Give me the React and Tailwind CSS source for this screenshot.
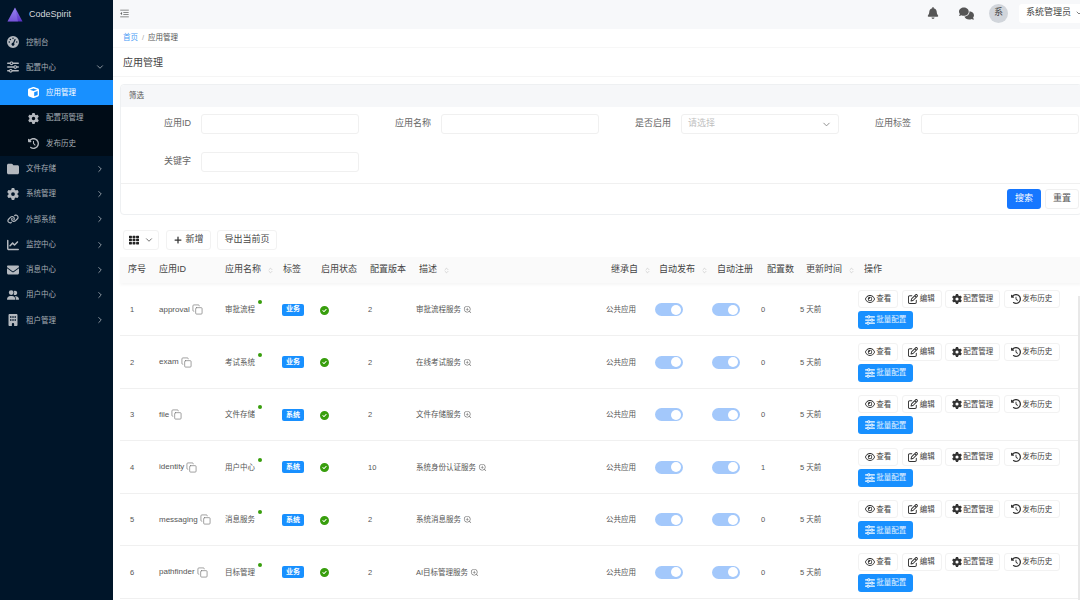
import React from 'react'
import {
  FaGaugeHigh, FaSliders, FaCube, FaGear, FaClockRotateLeft, FaFolder, FaLink, FaChartLine,
  FaEnvelope, FaUserGroup, FaBuilding, FaBell, FaComments, FaRegEye, FaRegPenToSquare, FaCircleCheck,
} from 'react-icons/fa6'
import { FaTh } from 'react-icons/fa'
import { AiOutlineMenuFold, AiOutlineZoomIn } from 'react-icons/ai'
import { ChevronDown, ChevronRight, Plus, Copy, ChevronsUpDown } from 'lucide-react'

const FONT = { fontFamily: '"Liberation Sans", "Noto Sans CJK SC", sans-serif' }

const topMenus = [
  { label: '文件存储', icon: FaFolder },
  { label: '系统管理', icon: FaGear },
  { label: '外部系统', icon: FaLink },
  { label: '监控中心', icon: FaChartLine },
  { label: '消息中心', icon: FaEnvelope },
  { label: '用户中心', icon: FaUserGroup },
  { label: '租户管理', icon: FaBuilding },
]

const rows = [
  { no: 1, id: 'approval', name: '审批流程', tag: '业务', version: 2, desc: '审批流程服务', count: 0 },
  { no: 2, id: 'exam', name: '考试系统', tag: '业务', version: 2, desc: '在线考试服务', count: 0 },
  { no: 3, id: 'file', name: '文件存储', tag: '系统', version: 2, desc: '文件存储服务', count: 0 },
  { no: 4, id: 'identity', name: '用户中心', tag: '系统', version: 10, desc: '系统身份认证服务', count: 1 },
  { no: 5, id: 'messaging', name: '消息服务', tag: '系统', version: 2, desc: '系统消息服务', count: 0 },
  { no: 6, id: 'pathfinder', name: '目标管理', tag: '业务', version: 2, desc: 'AI目标管理服务', count: 0 },
]

const columns = [
  { label: '序号', w: 'w-[32px]' },
  { label: '应用ID', w: 'w-[67px]' },
  { label: '应用名称', w: 'w-[58px]', sort: true },
  { label: '标签', w: 'w-[38px]' },
  { label: '启用状态', w: 'w-[49px]' },
  { label: '配置版本', w: 'w-[49px]' },
  { label: '描述', w: 'w-[192px]', sort: true },
  { label: '继承自', w: 'w-[48px]', sort: true },
  { label: '自动发布', w: 'w-[58px]', sort: true },
  { label: '自动注册', w: 'w-[50px]' },
  { label: '配置数', w: 'w-[39px]' },
  { label: '更新时间', w: 'w-[58px]', sort: true },
  { label: '操作', w: 'w-[224px]' },
]

function SideItem({ icon: Icon, label, open, arrow = true }) {
  return (
    <div className="h-[25.3px] flex items-center pl-[7px] pr-[8px] text-[7.5px] text-[#a6adb4]">
      <Icon className="w-[12px] h-[12px] text-[#b4b9bf] shrink-0" />
      <span className="ml-[7px] flex-1">{label}</span>
      {arrow && (open
        ? <ChevronDown className="w-[10px] h-[10px]" />
        : <ChevronRight className="w-[10px] h-[10px]" />)}
    </div>
  )
}

function SubItem({ icon: Icon, label, active }) {
  return (
    <div className={`h-[25.3px] flex items-center pl-[28px] text-[7.5px] ${active ? 'bg-[#1890ff] text-white' : 'text-[#a6adb4]'}`}>
      <Icon className={`w-[11px] h-[11px] shrink-0 ${active ? 'text-white' : 'text-[#b4b9bf]'}`} />
      <span className="ml-[7px]">{label}</span>
    </div>
  )
}

function Sidebar() {
  return (
    <aside className="w-[113px] shrink-0 bg-[#001529] h-[600px]">
      <div className="h-[29.5px] flex items-center pl-[7px]">
        <svg width="16" height="15" viewBox="0 0 16 15">
          <defs>
            <linearGradient id="logo" x1="0" y1="0" x2="0" y2="1">
              <stop offset="0" stopColor="#8f7cf0" />
              <stop offset="1" stopColor="#5a2fc4" />
            </linearGradient>
          </defs>
          <path d="M8 0.5 L15.5 14.5 L0.5 14.5 Z" fill="url(#logo)" />
          <path d="M8 0.5 L11 14.5 L0.5 14.5 Z" fill="#a897f5" opacity="0.35" />
        </svg>
        <span className="ml-[6px] text-[9px] text-[#d5d8dc]">CodeSpirit</span>
      </div>
      <SideItem icon={FaGaugeHigh} label="控制台" arrow={false} />
      <SideItem icon={FaSliders} label="配置中心" open />
      <SubItem icon={FaCube} label="应用管理" active />
      <div className="bg-[#000c17]">
        <SubItem icon={FaGear} label="配置项管理" />
        <SubItem icon={FaClockRotateLeft} label="发布历史" />
      </div>
      {topMenus.map((m) => (
        <SideItem key={m.label} icon={m.icon} label={m.label} />
      ))}
    </aside>
  )
}

function Field({ label, children }) {
  return (
    <div className="flex items-center h-[20px]">
      <label className="w-[70px] text-right text-[9px] text-[#666] shrink-0">{label}</label>
      <div className="ml-[10px] w-[158px]">{children}</div>
    </div>
  )
}

function TextBox() {
  return <div className="h-[20px] rounded-[3px] border border-[#f0f0f0] bg-white" />
}

function FilterCard() {
  return (
    <div className="mt-[7px] ml-[7px] w-[962px] h-[131px] rounded-[4px] border border-[#eef0f2] bg-white">
      <div className="h-[22px] bg-[#f6f7f9] rounded-t-[4px] flex items-center pl-[8px] text-[7.5px] text-[#555]">筛选</div>
      <div className="grid grid-cols-[240px_240px_240px_240px] content-start gap-y-[18px] pt-[7px] h-[76px]">
        <Field label="应用ID"><TextBox /></Field>
        <Field label="应用名称"><TextBox /></Field>
        <Field label="是否启用">
          <div className="h-[20px] rounded-[3px] border border-[#f0f0f0] flex items-center justify-between px-[6px] text-[9px] text-[#bfbfbf]">
            请选择
            <ChevronDown className="w-[11px] h-[11px] text-[#888]" />
          </div>
        </Field>
        <Field label="应用标签"><TextBox /></Field>
        <Field label="关键字"><TextBox /></Field>
      </div>
      <div className="border-t border-[#f0f0f0] h-[31px] flex items-center justify-end gap-[4px] pr-[2px]">
        <button className="w-[34px] h-[20px] rounded-[3px] bg-[#1677ff] text-white text-[9px]">搜索</button>
        <button className="w-[34px] h-[20px] rounded-[3px] border border-[#f0f0f0] text-[#555] text-[9px]">重置</button>
      </div>
    </div>
  )
}

function Toolbar() {
  return (
    <div className="flex items-center mt-[14px] ml-[10px] h-[21px] text-[9px] text-[#444]">
      <button className="w-[36px] h-[20px] rounded-[3px] border border-[#f2f2f2] flex items-center justify-center gap-[5px]">
        <FaTh className="w-[10px] h-[10px] text-[#222]" />
        <ChevronDown className="w-[10px] h-[10px] text-[#555]" />
      </button>
      <button className="ml-[7px] w-[45px] h-[20px] rounded-[3px] border border-[#f2f2f2] flex items-center justify-center gap-[2px]">
        <Plus className="w-[10px] h-[10px] text-[#333]" strokeWidth={3} />
        新增
      </button>
      <button className="ml-[6px] w-[60px] h-[20px] rounded-[3px] border border-[#f2f2f2]">导出当前页</button>
    </div>
  )
}

function ActionBtn({ icon: Icon, label, w, primary }) {
  return (
    <button className={`${w} h-[18px] rounded-[3px] flex items-center justify-center gap-[1.5px] text-[7.5px] ${primary ? 'bg-[#1890ff] text-[#e6f2ff]' : 'border border-[#f2f2f2] bg-white text-[#444]'}`}>
      <Icon className={`w-[10px] h-[10px] shrink-0 ${primary ? 'text-white' : 'text-[#333]'}`} />
      {label}
    </button>
  )
}

function Toggle() {
  return (
    <div className="w-[28px] h-[13px] rounded-full bg-[#a3c8fb] flex items-center justify-end pr-[2px]">
      <div className="w-[10px] h-[10px] rounded-full bg-white" />
    </div>
  )
}

function AppTable() {
  return (
    <table className="ml-[7px] mt-[7px] w-[962px] table-fixed border-collapse text-[7.5px] text-[#555]">
      <thead>
        <tr className="h-[26px] bg-[#fafafa] shadow-[0_2px_3px_rgba(0,0,0,0.04)]">
          {columns.map((c, i) => (
            <th key={c.label} className={`${c.w} p-0 text-left font-normal text-[9px] text-[#444] ${i === 0 ? 'pl-[8px]' : i === 1 ? 'pl-[7px]' : 'pl-[6px]'}`}>
              <span className="flex items-center whitespace-nowrap">
                {c.label}
                {c.sort && <ChevronsUpDown className="ml-[6px] w-[7px] h-[9px] text-[#bbb] shrink-0" />}
              </span>
            </th>
          ))}
        </tr>
      </thead>
      <tbody>
        {rows.map((r) => (
          <tr key={r.no} className="h-[52.5px] border-b border-[#f0f0f0] [&>td]:pt-[1px]">
            <td className="p-0 pl-[10px]">{r.no}</td>
            <td className="p-0 pl-[7px]">
              <span className="flex items-center gap-[2px] text-[8px]">
                {r.id}
                <Copy className="w-[11px] h-[11px] text-[#777]" strokeWidth={1.5} />
              </span>
            </td>
            <td className="p-0 pl-[6px]">
              <span className="relative inline-block">
                {r.name}
                <span className="absolute top-[-4px] right-[-7px] w-[4px] h-[4px] rounded-full bg-[#389e0d]" />
              </span>
            </td>
            <td className="p-0 pl-[5px]">
              <span className="inline-flex items-center justify-center w-[22px] h-[12px] rounded-[2px] bg-[#1890ff] text-white text-[7px] font-bold">{r.tag}</span>
            </td>
            <td className="p-0 pl-[5px]">
              <FaCircleCheck className="w-[9px] h-[9px] text-[#389e0d] mt-[1px]" />
            </td>
            <td className="p-0 pl-[4px]">{r.version}</td>
            <td className="p-0 pl-[3px]">
              <span className="flex items-center gap-[2px]">
                {r.desc}
                <AiOutlineZoomIn className="w-[9px] h-[9px] text-[#777]" />
              </span>
            </td>
            <td className="p-0 pl-[1px]">公共应用</td>
            <td className="p-0 pl-[2px]"><Toggle /></td>
            <td className="p-0 pl-[1px]"><Toggle /></td>
            <td className="p-0">{r.count}</td>
            <td className="p-0">5 天前</td>
            <td className="p-0">
              <div className="flex flex-wrap gap-x-[3.5px] gap-y-[3px] w-[206px]">
                <ActionBtn icon={FaRegEye} label="查看" w="w-[40px]" />
                <ActionBtn icon={FaRegPenToSquare} label="编辑" w="w-[40px]" />
                <ActionBtn icon={FaGear} label="配置管理" w="w-[55px]" />
                <ActionBtn icon={FaClockRotateLeft} label="发布历史" w="w-[56px]" />
                <ActionBtn icon={FaSliders} label="批量配置" w="w-[55px]" primary />
              </div>
            </td>
          </tr>
        ))}
      </tbody>
    </table>
  )
}

export default function App() {
  return (
    <div className="relative flex w-[1080px] h-[600px] overflow-hidden bg-white" style={FONT}>
      <Sidebar />
      <main className="flex-1 min-w-0 overflow-hidden">
        <header className="h-[29px] pb-[3px] bg-[#f7f8fa] flex items-center pl-[6px]">
          <AiOutlineMenuFold className="w-[11px] h-[11px] text-[#666]" />
          <div className="ml-auto flex items-center">
            <FaBell className="w-[12px] h-[12px] text-[#555]" />
            <FaComments className="ml-[20px] w-[15px] h-[15px] text-[#555]" />
            <span className="ml-[15px] w-[19px] h-[19px] rounded-full bg-[#d1d5db] flex items-center justify-center text-[9px] text-[#444]">系</span>
            <div className="ml-[11px] w-[61px] h-[19px] rounded-l-[3px] bg-white flex items-center pl-[7px] text-[9px] text-[#444] whitespace-nowrap">
              系统管理员
              <ChevronDown className="ml-[4px] w-[8px] h-[8px] shrink-0" />
            </div>
          </div>
        </header>
        <div className="h-[19px] flex items-center pl-[10px] text-[7.5px] border-b border-[#f7f7f7]">
          <span className="text-[#4a9cf5]">首页</span>
          <span className="mx-[4px] text-[#aaa]">/</span>
          <span className="text-[#555]">应用管理</span>
        </div>
        <div className="h-[29px] flex items-center pl-[10px] text-[10px] text-[#444] border-b border-[#f5f5f5]">应用管理</div>
        <FilterCard />
        <Toolbar />
        <AppTable />
      </main>
      {/* scrollbar sliver at the window's right edge */}
      <div className="absolute right-0 top-[296px] bottom-0 w-[2px] bg-[#e8e8e8]" />
    </div>
  )
}
